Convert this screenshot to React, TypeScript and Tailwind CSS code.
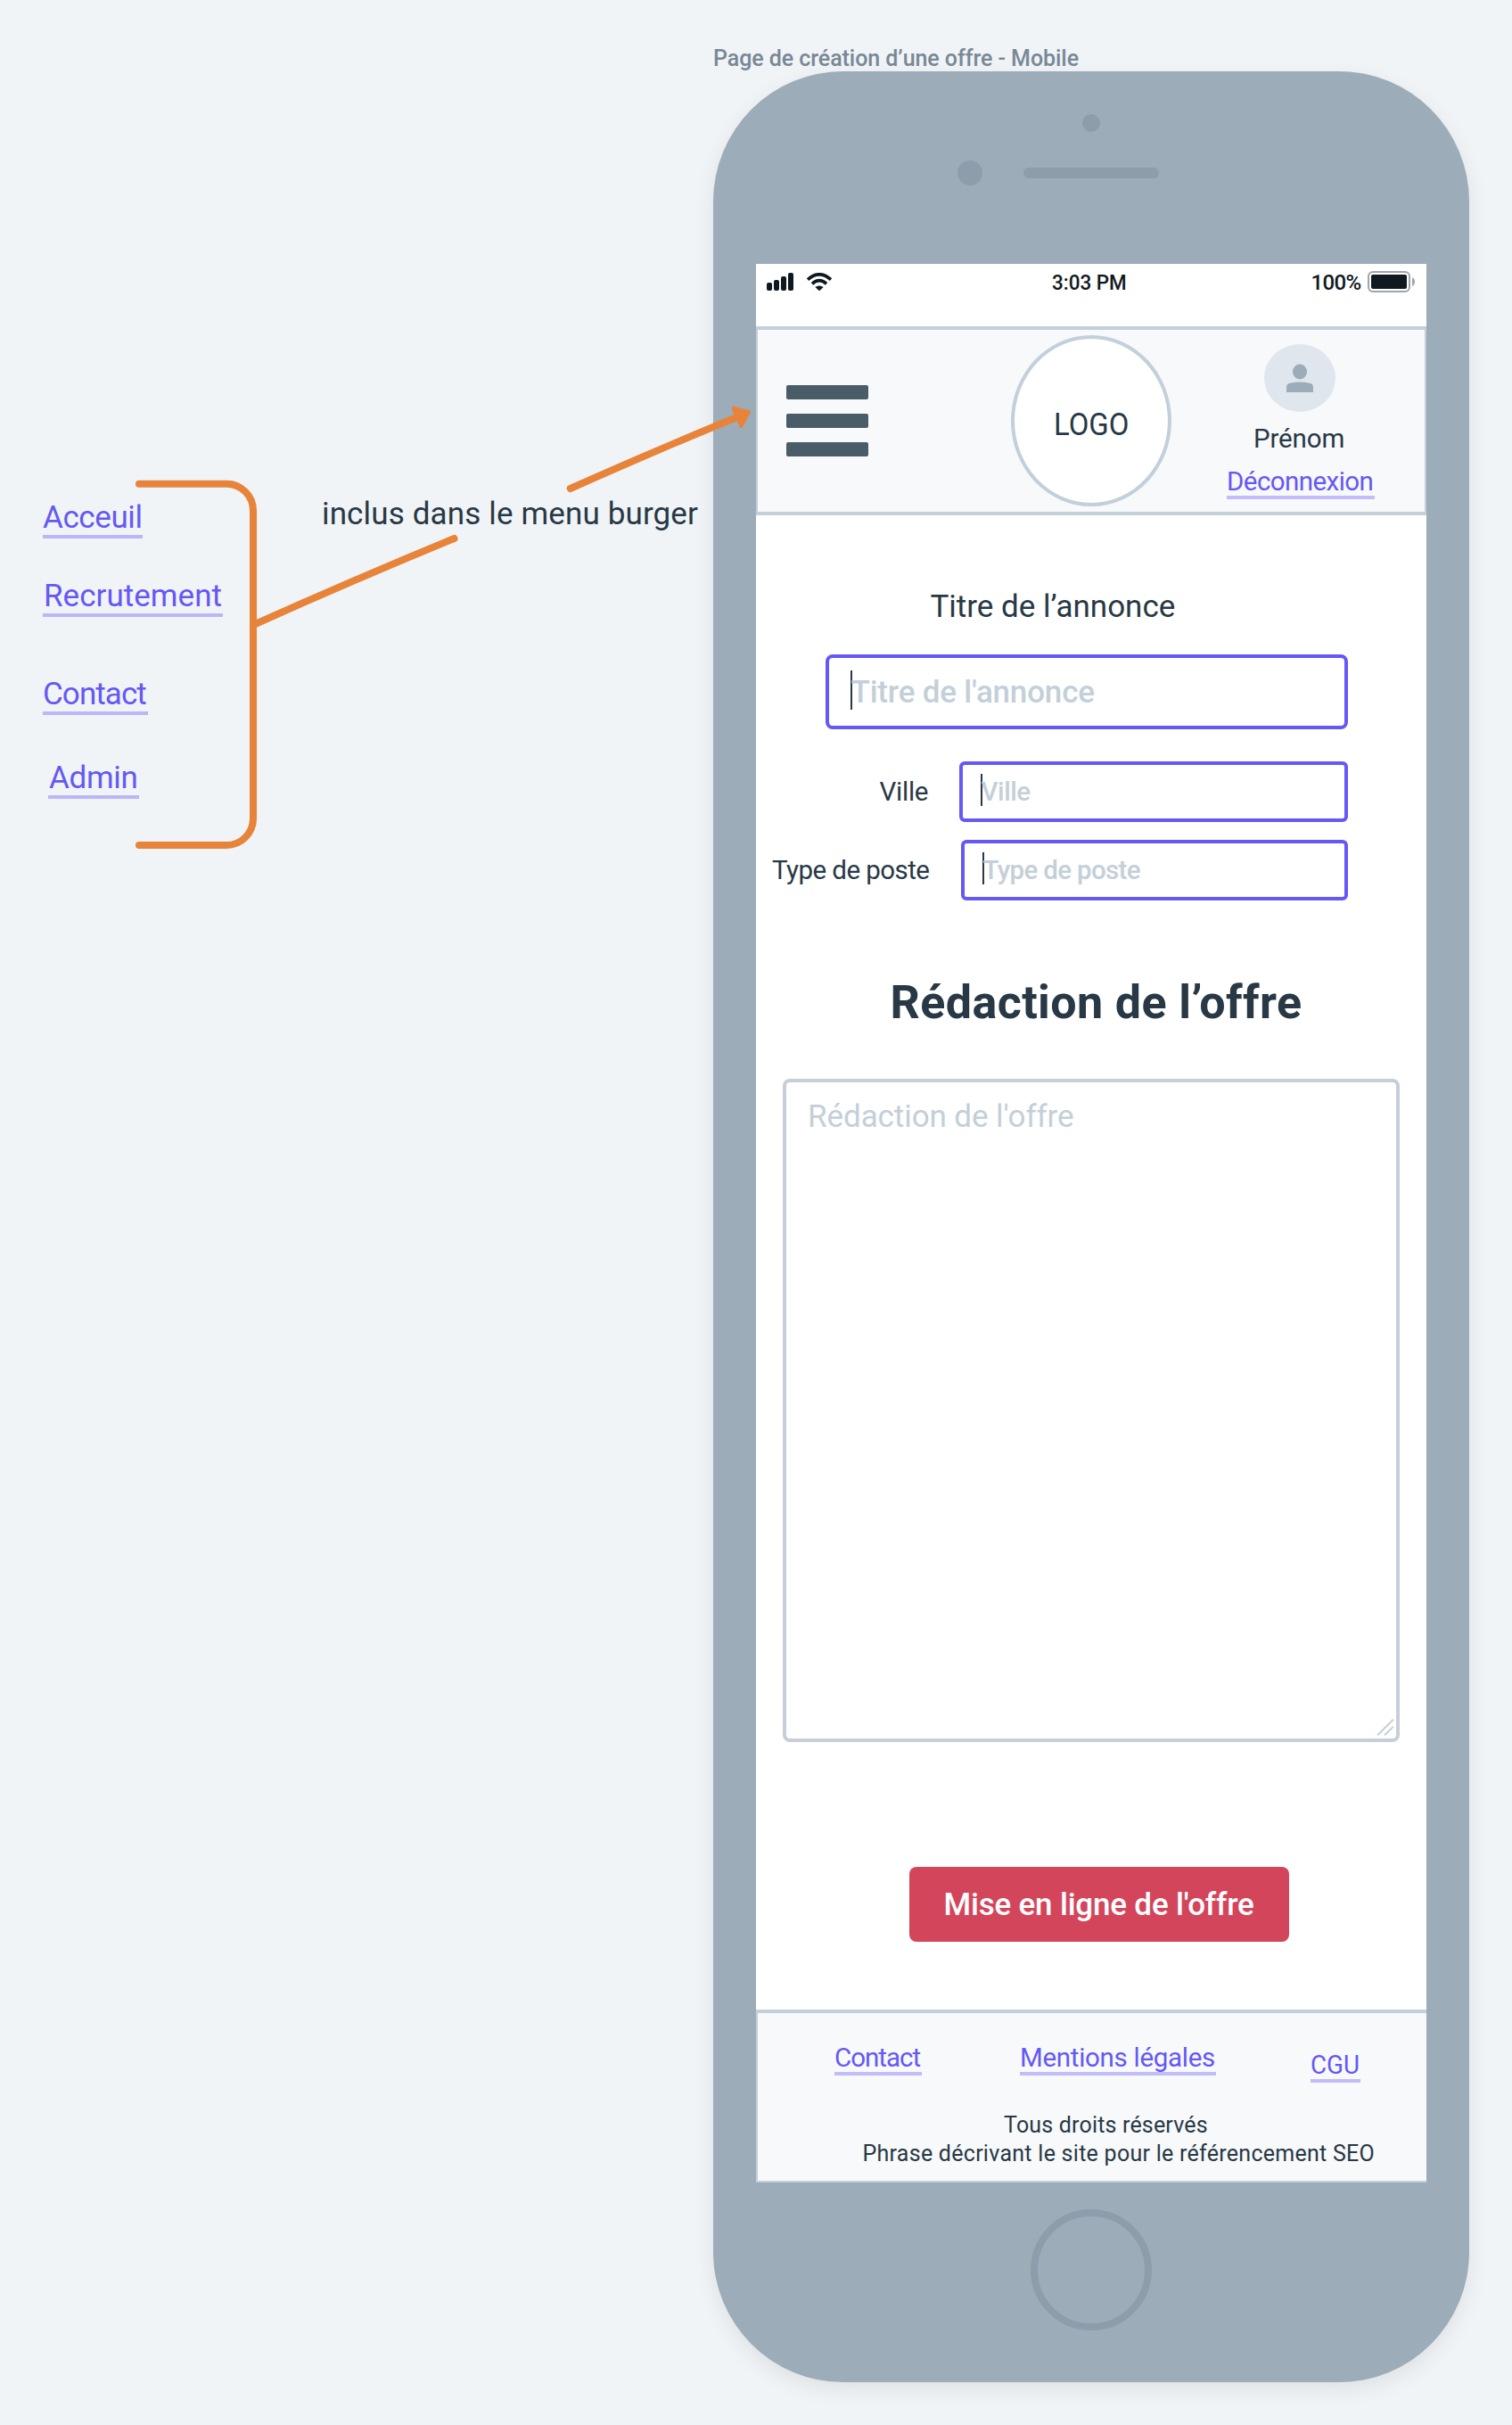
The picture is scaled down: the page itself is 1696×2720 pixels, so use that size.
import type { ReactNode } from "react";

function NavLink({ className, children }: { className: string; children: ReactNode }) {
  return (
    <a
      className={`block h-[44px] whitespace-nowrap border-b-4 border-[#bab7f8] text-[35px] leading-[41px] text-[#6558f5] ${className}`}
    >
      {children}
    </a>
  );
}

function SmallLink({ className, children }: { className: string; children: ReactNode }) {
  return (
    <a
      className={`block h-[37px] whitespace-nowrap border-b-4 border-[#c1bdf9] text-[29.5px] leading-[34px] text-[#6558f5] ${className}`}
    >
      {children}
    </a>
  );
}

function Annotations() {
  return (
    <svg
      className="pointer-events-none absolute left-0 top-0"
      width="860"
      height="1000"
      viewBox="0 0 860 1000"
      fill="none"
      stroke="#e8833a"
      strokeWidth="8"
      strokeLinecap="round"
      strokeLinejoin="round"
    >
      <path d="M156 542.7H254A30 30 0 0 1 284 572.7V918A30 30 0 0 1 254 948H156" />
      <path d="M284 701Q398 650 509.5 604" />
      <path d="M639.7 548Q750 499 828 467.5" />
      <path d="M822.6 457.6L840 462.2L831.4 478Z" fill="#e8833a" strokeWidth="4" />
    </svg>
  );
}

function StatusBar() {
  return (
    <div className="flex h-[70px] items-start pt-[7px] text-[24px] font-medium leading-[28px] text-[#101920]">
      <svg className="ml-[12px] mt-[3px]" width="74" height="20" viewBox="0 0 74 20">
        <g fill="#101920">
          <rect x="0" y="11" width="6" height="9" rx="2" />
          <rect x="8" y="8" width="6" height="12" rx="2" />
          <rect x="16" y="4" width="6" height="16" rx="2" />
          <rect x="24" y="0" width="6" height="20" rx="2" />
          <path d="M54.3 15.9Q59 12.9 63.7 15.9L59 20.3Z" />
        </g>
        <g fill="none" stroke="#101920" strokeWidth="3.6">
          <path d="M46 7.6Q59 -4 72 7.6" />
          <path d="M51 12.3Q59 5 67 12.3" />
        </g>
      </svg>
      <span className="ml-[245.5px] w-[291px]">
        <span className="inline-block origin-left scale-x-[0.935]">3:03 PM</span>
      </span>
      <span className="w-[63.5px] tracking-[-0.64px]">100%</span>
      <span className="mt-px h-[24px] w-[48px] rounded-[6px] border-2 border-[#9fa4a8] p-[2px]">
        <span className="block h-[16px] w-[40px] rounded-[2px] bg-[#101920]" />
      </span>
      <svg className="ml-[2px] mt-[8px]" width="3" height="10" viewBox="0 0 3 10">
        <path d="M0 0Q3 1.5 3 5T0 10Z" fill="#9fa4a8" />
      </svg>
    </div>
  );
}

function Header() {
  return (
    <header className="flex h-[212px] items-start border-x-2 border-y-4 border-[#c3cfd9] bg-[#f7f9fb]">
      <div className="ml-[32px] mt-[62px] flex w-[92px] flex-col gap-[16px]">
        <span className="h-[16px] rounded-[2px] bg-[#4b5c69]" />
        <span className="h-[16px] rounded-[2px] bg-[#4b5c69]" />
        <span className="h-[16px] rounded-[2px] bg-[#4b5c69]" />
      </div>
      <div className="ml-[160px] mt-[6px] h-[192px] w-[180px] rounded-[50%] border-4 border-[#c3cfd9] bg-white pl-[44px] pt-[76px] text-[35px] leading-[41px]">
        <span className="inline-block origin-left scale-x-[0.94]">LOGO</span>
      </div>
      <div className="ml-[62px] mt-[16px] flex w-[166px] flex-col">
        <div className="ml-[42px] h-[76px] w-[80px] rounded-[50%] bg-[#dfe6ed]">
          <svg width="80" height="76" viewBox="0 0 80 76" fill="#9dacb9">
            <rect x="32" y="22.5" width="16" height="17" rx="8" ry="8.3" />
            <path d="M25 54V48Q25 44.5 29 43.7Q40 41.3 51 43.7Q55 44.5 55 48V54Z" />
          </svg>
        </div>
        <span className="ml-[30px] mt-[13px] text-[29.5px] leading-[34px] tracking-[-0.12px]">Prénom</span>
        <SmallLink className="mt-[14px] w-[166px] tracking-[-0.56px]">Déconnexion</SmallLink>
      </div>
    </header>
  );
}

function SmallField({ label, labelClass, inputClass, textClass }: {
  label: string;
  labelClass: string;
  inputClass: string;
  textClass: string;
}) {
  return (
    <div className="flex h-[68px] items-start whitespace-nowrap text-[29.5px] leading-[34px]">
      <label className={`mt-[17px] ${labelClass}`}>{label}</label>
      <div className={`flex h-[68px] items-start rounded-[6px] border-4 border-[#6558f5] pl-[20px] ${inputClass}`}>
        <span className="mt-[10px] h-[36px] w-[2px] bg-[#283845]" />
        <span className={`-ml-[1.5px] mt-[13px] font-medium text-[#c3cfd9] ${textClass}`}>{label}</span>
      </div>
    </div>
  );
}

function OfferForm() {
  return (
    <main className="h-[1676px] pt-[82px]">
      <label className="block h-[41px] pl-[195.5px] text-[35px] leading-[41px] tracking-[-0.02px]">
        Titre de l’annonce
      </label>
      <div className="ml-[78px] mt-[33px] flex h-[84px] w-[586px] items-start rounded-[8px] border-4 border-[#6558f5] pl-[24px]">
        <span className="mt-[14px] h-[44px] w-[2px] bg-[#283845]" />
        <span className="-ml-[1.5px] mt-[18px] text-[35px] font-medium leading-[41px] tracking-[-0.19px] text-[#c3cfd9]">
          Titre de l'annonce
        </span>
      </div>
      <div className="mt-[36px] flex flex-col gap-[20px]">
        <SmallField
          label="Ville"
          labelClass="ml-[138.5px] w-[89.5px] tracking-[-0.25px]"
          inputClass="w-[436px]"
          textClass="tracking-[-0.45px]"
        />
        <SmallField
          label="Type de poste"
          labelClass="ml-[18px] w-[212px] tracking-[-0.55px]"
          inputClass="w-[434px]"
          textClass="tracking-[-0.66px]"
        />
      </div>
      <h1 className="mt-[84px] h-[61px] pl-[150.6px] text-[52px] font-bold leading-[61px] tracking-[0.39px]">
        Rédaction de l’offre
      </h1>
      <div className="ml-[30px] mt-[55px] flex h-[744px] w-[692px] justify-between rounded-[8px] border-4 border-[#c5ced9] pl-[24px] pt-[18px]">
        <span className="text-[35px] leading-[41px] tracking-[-0.08px] text-[#c3cfd9]">Rédaction de l'offre</span>
        <svg className="mb-[2px] mr-[2px] self-end" width="20" height="20" viewBox="0 0 20 20">
          <path
            d="M1.7 17.7L18.3 1.3M9.7 17.7L18.3 9.3"
            stroke="#c3cfd9"
            strokeWidth="2"
            strokeLinecap="round"
          />
        </svg>
      </div>
      <button className="ml-[172px] mt-[140px] block h-[84px] w-[426px] rounded-[8px] bg-[#d3455b] pb-[21px] pl-[38.5px] pt-[22px] text-left text-[35px] font-medium leading-[41px] tracking-[-0.19px] text-white">
        Mise en ligne de l'offre
      </button>
    </main>
  );
}

function Footer() {
  return (
    <footer className="h-[194px] border-b-2 border-l-2 border-t-4 border-[#c3cfd9] bg-[#f7f9fb] pt-[33px]">
      <nav className="flex h-[45px] items-start">
        <SmallLink className="ml-[86px] w-[98px] tracking-[-0.99px]">Contact</SmallLink>
        <SmallLink className="ml-[110px] w-[220px] tracking-[-0.29px]">Mentions légales</SmallLink>
        <SmallLink className="ml-[106px] mt-[8px] w-[56px]">
          <span className="inline-block origin-left scale-x-[0.94]">CGU</span>
        </SmallLink>
      </nav>
      <div className="mt-[32px] whitespace-nowrap text-[25px] leading-[32px]">
        <p className="pl-[276px] tracking-[0.18px]">Tous droits réservés</p>
        <p className="pl-[117.5px] tracking-[0.27px]">Phrase décrivant le site pour le référencement SEO</p>
      </div>
    </footer>
  );
}

function Phone() {
  return (
    <div className="flex h-[2592px] w-[848px] flex-col rounded-[146px] bg-[#9dacb9] px-[48px] shadow-[0_8px_24px_rgba(0,0,0,0.08)]">
      <div className="flex h-[216px] flex-col pt-[48px]">
        <span className="ml-[366px] h-[20px] w-[20px] rounded-full bg-[#8d9dac]" />
        <div className="mt-[32px] flex items-center">
          <span className="ml-[226px] h-[28px] w-[28px] rounded-full bg-[#8d9dac]" />
          <span className="ml-[46px] h-[12px] w-[152px] rounded-full bg-[#8d9dac]" />
        </div>
      </div>
      <div className="h-[2152px] bg-white">
        <StatusBar />
        <Header />
        <OfferForm />
        <Footer />
      </div>
      <span className="ml-[308px] mt-[30px] h-[136px] w-[136px] rounded-full border-8 border-[#8d9dac]" />
    </div>
  );
}

export default function App() {
  return (
    <div className="relative flex h-[2720px] w-[1696px] items-start overflow-hidden bg-[#f0f4f7] font-['Roboto',sans-serif] text-[#283845]">
      <aside className="flex w-[800px] items-start">
        <nav className="ml-[48px] mt-[560px] flex w-[313px] flex-col items-start">
          <NavLink className="w-[112px] tracking-[-0.41px]">Acceuil</NavLink>
          <NavLink className="mt-[44px] w-[202px] pl-px tracking-[0.03px]">Recrutement</NavLink>
          <NavLink className="mt-[66px] w-[118px] tracking-[-0.93px]">Contact</NavLink>
          <NavLink className="ml-[6px] mt-[50px] w-[102px] pl-px tracking-[-0.3px]">Admin</NavLink>
        </nav>
        <p className="mt-[556px] whitespace-nowrap text-[35px] leading-[41px] tracking-[0.14px]">
          inclus dans le menu burger
        </p>
      </aside>
      <section>
        <h2 className="h-[80px] whitespace-nowrap pt-[50px] text-[25px] leading-[32px] tracking-[-0.06px] font-medium text-[#788896]">
          Page de création d’une offre - Mobile
        </h2>
        <Phone />
      </section>
      <Annotations />
    </div>
  );
}
